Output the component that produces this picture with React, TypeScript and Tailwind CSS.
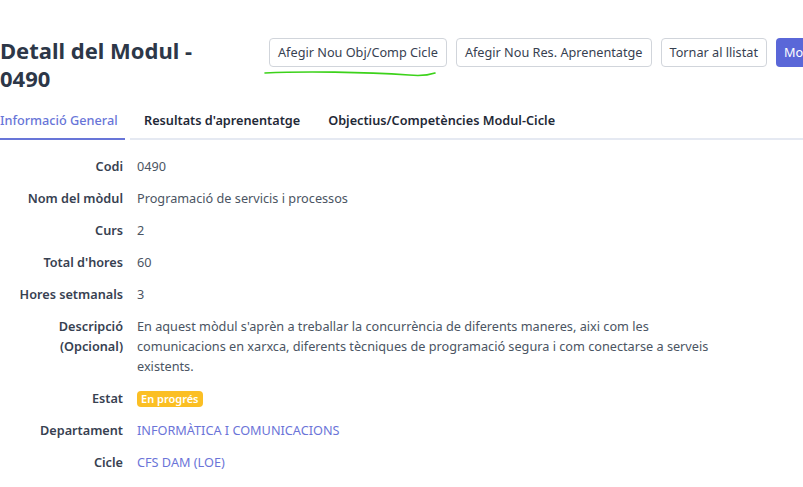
import React from "react";

const font = { fontFamily: '"Noto Sans", "Open Sans", sans-serif' };

function Row({ label, children }: { label: React.ReactNode; children: React.ReactNode }) {
  return (
    <div className="flex items-start">
      <div className="w-[123px] shrink-0 text-right font-semibold text-[#374151] leading-5">{label}</div>
      <div className="ml-[14px] text-[#4b5563] leading-5">{children}</div>
    </div>
  );
}

export default function App() {
  return (
    <div className="w-[803px] h-[487px] bg-white overflow-hidden relative text-[12.7px]" style={font}>
      <div className="flex items-start pt-[36px]">
        <h1 className="w-[230px] shrink-0 text-[22px] font-bold leading-[28px] text-[#2d3748]">
          Detall del Modul - 0490
        </h1>
        <div className="flex gap-[9px] ml-[39px] mt-[2px] whitespace-nowrap text-[12.7px] text-[#374151]">
          <button className="h-[29px] px-[8px] border border-[#d1d5db] rounded bg-white">Afegir Nou Obj/Comp Cicle</button>
          <button className="h-[29px] px-[8px] border border-[#d1d5db] rounded bg-white">Afegir Nou Res. Aprenentatge</button>
          <button className="h-[29px] px-[8px] border border-[#d1d5db] rounded bg-white">Tornar al llistat</button>
          <button className="h-[29px] px-[8px] rounded bg-[#5a67d8] text-white">Modificar</button>
        </div>
      </div>

      <svg className="absolute left-[264px] top-[68px]" width="175" height="12" viewBox="0 0 175 12">
        <path d="M1 5 C 40 3, 100 4, 145 7 C 155 8, 165 7, 171 5" stroke="#3cd21a" strokeWidth="1.6" fill="none" strokeLinecap="round" />
      </svg>

      <div className="flex mt-[19px] text-[12.7px] font-semibold">
        <div className="w-[125px] pb-[8px] border-b-2 border-[#6875d8] text-[#6875d8] font-medium">Informació General</div>
        <div className="flex-1 ml-[5px] border-b-2 border-[#e5e9f2] flex text-[#1f2937]">
          <span className="ml-[14px]">Resultats d'aprenentatge</span>
          <span className="ml-[28px]">Objectius/Competències Modul-Cicle</span>
        </div>
      </div>

      <div className="flex flex-col gap-[12px] mt-[16px]">
        <Row label="Codi">0490</Row>
        <Row label="Nom del mòdul">Programació de servicis i processos</Row>
        <Row label="Curs">2</Row>
        <Row label="Total d'hores">60</Row>
        <Row label="Hores setmanals">3</Row>
        <Row label={<>Descripció<br />(Opcional)</>}>
          <div className="w-[590px]">
            En aquest mòdul s'aprèn a treballar la concurrència de diferents maneres, aixi com les comunicacions en xarxca, diferents tècniques de programació segura i com conectarse a serveis existents.
          </div>
        </Row>
        <Row label="Estat">
          <span className="inline-block bg-[#fbbf24] text-white text-[11px] font-semibold rounded px-[4px] leading-[16px] mt-[2px]">En progrés</span>
        </Row>
        <Row label="Departament"><span className="text-[#6b74d8]">INFORMÀTICA I COMUNICACIONS</span></Row>
        <Row label="Cicle"><span className="text-[#6b74d8]">CFS DAM (LOE)</span></Row>
      </div>
    </div>
  );
}
